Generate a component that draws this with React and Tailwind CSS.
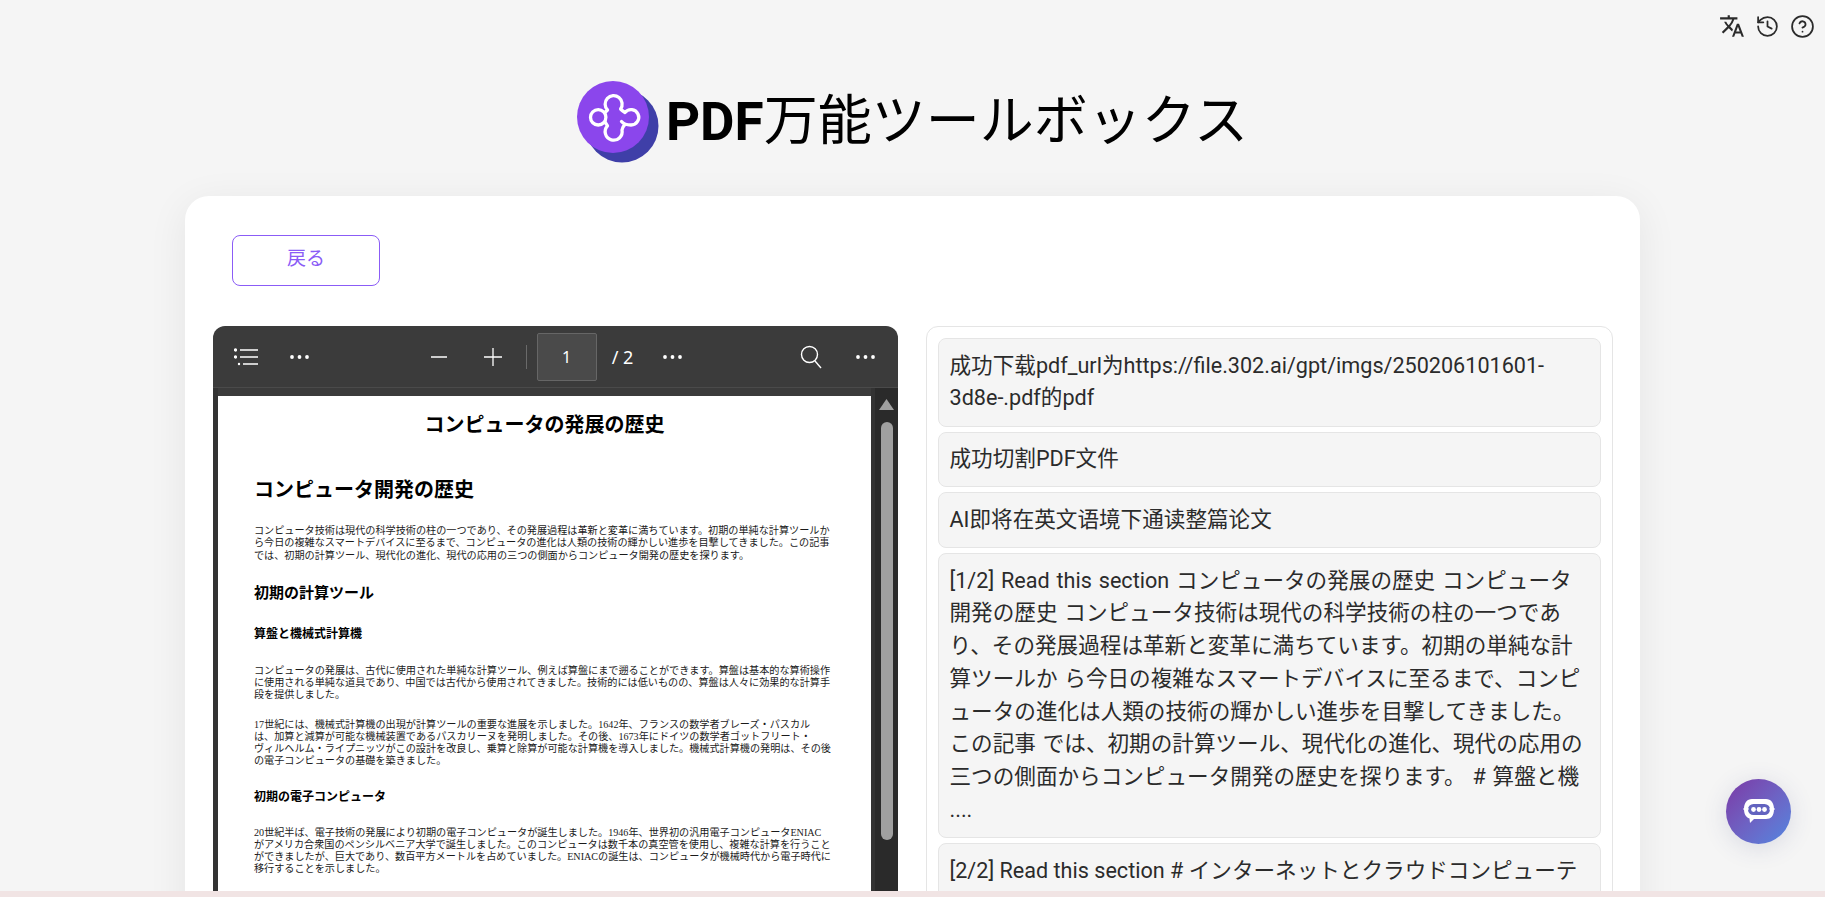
import { History, CircleHelp } from "lucide-react";
import { MdTranslate } from "react-icons/md";

const uiJa = "font-['Roboto','Noto_Sans_CJK_JP',sans-serif]";
const uiZh = "font-['Roboto','Noto_Sans_CJK_SC',sans-serif]";
const pdfFont = "font-['Liberation_Serif','Noto_Sans_CJK_JP',serif]";

const paragraphs = {
  intro: [
    "コンピュータ技術は現代の科学技術の柱の一つであり、その発展過程は革新と変革に満ちています。初期の単純な計算ツールか",
    "ら今日の複雑なスマートデバイスに至るまで、コンピュータの進化は人類の技術の輝かしい進歩を目撃してきました。この記事",
    "では、初期の計算ツール、現代化の進化、現代の応用の三つの側面からコンピュータ開発の歴史を探ります。",
  ],
  abacus: [
    "コンピュータの発展は、古代に使用された単純な計算ツール、例えば算盤にまで遡ることができます。算盤は基本的な算術操作",
    "に使用される単純な道具であり、中国では古代から使用されてきました。技術的には低いものの、算盤は人々に効果的な計算手",
    "段を提供しました。",
  ],
  machine: [
    "17世紀には、機械式計算機の出現が計算ツールの重要な進展を示しました。1642年、フランスの数学者ブレーズ・パスカル",
    "は、加算と減算が可能な機械装置であるパスカリーヌを発明しました。その後、1673年にドイツの数学者ゴットフリート・",
    "ヴィルヘルム・ライプニッツがこの設計を改良し、乗算と除算が可能な計算機を導入しました。機械式計算機の発明は、その後",
    "の電子コンピュータの基礎を築きました。",
  ],
  eniac: [
    "20世紀半ば、電子技術の発展により初期の電子コンピュータが誕生しました。1946年、世界初の汎用電子コンピュータENIAC",
    "がアメリカ合衆国のペンシルベニア大学で誕生しました。このコンピュータは数千本の真空管を使用し、複雑な計算を行うこと",
    "ができましたが、巨大であり、数百平方メートルを占めていました。ENIACの誕生は、コンピュータが機械時代から電子時代に",
    "移行することを示しました。",
  ],
};

const sectionLines = [
  "[1/2] Read this section コンピュータの発展の歴史 コンピュータ",
  "開発の歴史 コンピュータ技術は現代の科学技術の柱の一つであ",
  "り、その発展過程は革新と変革に満ちています。初期の単純な計",
  "算ツールか ら今日の複雑なスマートデバイスに至るまで、コンピ",
  "ュータの進化は人類の技術の輝かしい進歩を目撃してきました。",
  "この記事 では、初期の計算ツール、現代化の進化、現代の応用の",
  "三つの側面からコンピュータ開発の歴史を探ります。 # 算盤と機",
];

function Logo() {
  return (
    <svg width="82" height="82" viewBox="0 0 82 82" className="shrink-0">
      <circle cx="45" cy="45" r="36.5" fill="#3f3fa8" />
      <circle cx="36" cy="36" r="36" fill="#8b46ec" />
      <g fill="none" stroke="white" strokeWidth="3.3" strokeLinecap="round" strokeLinejoin="round">
        <circle cx="21.2" cy="36.3" r="7.7" />
        <path d="M28 31.5 L30.5 29 A8.5 8.5 0 1 1 43.6 28 Q45.5 30 48 31.5 A7.7 7.7 0 1 1 54 44 C50 44 46.5 43 44.5 40.5" />
        <path d="M28 41 L30.5 44.8 A8.5 8.5 0 1 0 45 49 Q45.5 46 47.5 44" />
      </g>
    </svg>
  );
}

function Dots() {
  return (
    <svg width="21" height="6" viewBox="0 0 21 6" fill="white">
      <circle cx="3" cy="3" r="1.9" />
      <circle cx="10.5" cy="3" r="1.9" />
      <circle cx="18" cy="3" r="1.9" />
    </svg>
  );
}

function PdfToolbar() {
  return (
    <div className="flex h-[62px] items-center justify-between border-b border-[#4a4a4a] pl-[21px] pr-[22px] text-white">
      <div className="flex items-center gap-[31px]">
        <svg width="24" height="18" viewBox="0 0 24 18" fill="none" stroke="white" strokeWidth="1.3">
          <circle cx="1.5" cy="2" r="1" fill="white" />
          <circle cx="1.5" cy="9" r="1" fill="white" />
          <circle cx="5" cy="16" r="1.2" fill="white" stroke="none" />
          <path d="M6 2 H24 M6 9 H24 M9 16 H24" />
        </svg>
        <Dots />
      </div>
      <div className="ml-[4px] flex items-center">
        <svg width="16" height="16" viewBox="0 0 16 16" stroke="white" strokeWidth="1.3" className="mr-[37px]">
          <path d="M0 8 H16" />
        </svg>
        <svg width="18" height="18" viewBox="0 0 18 18" stroke="white" strokeWidth="1.3" className="mr-[24px]">
          <path d="M0 9 H18 M9 0 V18" />
        </svg>
        <div className="mr-[10px] h-[24px] w-px bg-[#6a6a6a]" />
        <div className="mr-[15px] flex h-[48px] w-[60px] items-center justify-center rounded-[2px] border border-[#666666] bg-[#4a4a4a] font-['Noto_Sans',sans-serif] text-base">
          1
        </div>
        <span className="mr-[29px] font-['Noto_Sans',sans-serif] text-lg">/ 2</span>
        <Dots />
      </div>
      <div className="flex items-center gap-[33px]">
        <svg width="22" height="24" viewBox="0 0 22 24" fill="none" stroke="white" strokeWidth="1.4">
          <circle cx="9.5" cy="9.5" r="8" />
          <path d="M15 16 L21 23" />
        </svg>
        <Dots />
      </div>
    </div>
  );
}

function PdfParagraph({ lines, className = "" }) {
  return (
    <div className={`text-[10.15px] leading-[12.25px] text-[#1a1a1a] ${className}`}>
      {lines.map((line) => (
        <div key={line} className="whitespace-nowrap">
          {line}
        </div>
      ))}
    </div>
  );
}

function PdfViewer() {
  return (
    <div className="h-[700px] overflow-hidden rounded-t-xl bg-[#3b3b3b]">
      <PdfToolbar />
      <div className="flex h-full">
        <div className="h-full w-[5px] bg-[#333333]" />
        <div className={`mt-[8px] h-full w-[653px] overflow-hidden bg-white pl-[36px] text-black ${pdfFont}`}>
          <h1 className="mt-[15px] pr-[36px] text-center text-[20px] font-bold leading-[28px]">コンピュータの発展の歴史</h1>
          <h2 className="mt-[37px] text-[20px] font-bold leading-[28px]">コンピュータ開発の歴史</h2>
          <PdfParagraph lines={paragraphs.intro} className="mt-[21px]" />
          <h3 className="mt-[20px] text-[15px] font-bold leading-[22px]">初期の計算ツール</h3>
          <h4 className="mt-[21px] text-[12px] font-bold leading-[18px]">算盤と機械式計算機</h4>
          <PdfParagraph lines={paragraphs.abacus} className="mt-[22px]" />
          <PdfParagraph lines={paragraphs.machine} className="mt-[17px]" />
          <h4 className="mt-[20px] text-[12px] font-bold leading-[18px]">初期の電子コンピュータ</h4>
          <PdfParagraph lines={paragraphs.eniac} className="mt-[21px]" />
        </div>
        <div className="h-full w-[4px] bg-[#333333]" />
        <div className="flex h-full w-[23px] flex-col items-center bg-[#2a2a2a] pt-[11px]">
          <svg width="15" height="11" viewBox="0 0 15 11" fill="#a0a0a0">
            <path d="M7.5 0 L15 11 H0 Z" />
          </svg>
          <div className="mt-[12px] h-[418px] w-[12px] rounded-full bg-[#a0a0a0]" />
        </div>
      </div>
    </div>
  );
}

function LogItem({ children, font = uiZh }) {
  return (
    <div className={`rounded-lg border border-[#e5e5e5] bg-[#f5f5f5] px-[10.5px] py-[10.5px] text-[21.6px] leading-[32.75px] text-[#2b2b2b] ${font}`}>
      {children}
    </div>
  );
}

function LogPanel() {
  return (
    <div className="flex h-[700px] flex-col gap-[5px] overflow-hidden rounded-xl border border-[#e5e5e5] p-[11px]">
      <LogItem>成功下载pdf_url为https://file.302.ai/gpt/imgs/250206101601-3d8e-.pdf的pdf</LogItem>
      <LogItem>成功切割PDF文件</LogItem>
      <LogItem>AI即将在英文语境下通读整篇论文</LogItem>
      <LogItem font={uiJa}>
        {sectionLines.map((line) => (
          <div key={line} className="whitespace-nowrap [word-spacing:1.5px]">
            {line}
          </div>
        ))}
        <div className="h-[33px]">....</div>
      </LogItem>
      <LogItem font={uiJa}>[2/2] Read this section # インターネットとクラウドコンピューティング</LogItem>
    </div>
  );
}

export default function App() {
  return (
    <div className="relative h-[897px] overflow-hidden bg-[#f1e4e4]">
      <div className="h-[891px] overflow-hidden bg-[#f5f5f5]">
        <div className="flex items-center justify-end gap-[10px] pr-[10px] pt-[13px] text-[#2b2b2b]">
          <MdTranslate size={26} />
          <History size={25} strokeWidth={1.7} />
          <CircleHelp size={25} strokeWidth={1.7} />
        </div>
        <div className="mt-[42px] flex items-center justify-center gap-[7px]">
          <Logo />
          <h1 className={`text-[54px] leading-[82px] text-black ${uiJa}`}>
            <span className="text-[53px] font-bold">PDF</span>万能ツールボックス
          </h1>
        </div>
        <div className="mx-auto mt-[33px] h-[800px] w-[1455px] rounded-3xl bg-white pl-[28px] pr-[27px] pt-[39px] shadow-[0_8px_40px_rgba(0,0,0,0.07)]">
          <button className={`ml-[19px] h-[51px] w-[148px] rounded-lg border border-[#8b5cf6] pb-[3px] text-[19px] text-[#8b5cf6] ${uiJa}`}>
            戻る
          </button>
          <div className="mt-[40px] grid grid-cols-[685px_687px] gap-[28px]">
            <PdfViewer />
            <LogPanel />
          </div>
        </div>
      </div>
      <div className="absolute bottom-[53px] right-[34px] flex h-[65px] w-[65px] items-center justify-center rounded-full bg-gradient-to-br from-[#7a38a6] to-[#4f86e0] shadow-[0_4px_24px_rgba(60,70,130,0.15)]">
        <svg width="32" height="28" viewBox="0 0 32 28">
          <path d="M9 1 H23 C28 1 31 5 31 11 C31 18 28 21 23 21 H11 L7 25 L6.5 20.5 C3 19.5 1 16 1 11 C1 5 4 1 9 1 Z" fill="white" />
          <rect x="5" y="6" width="22" height="11" rx="5.5" fill="#6263bf" />
          <path d="M0 11 H6 M26 11 H32" stroke="white" strokeWidth="1" />
          <circle cx="10.5" cy="11.5" r="2.4" fill="white" />
          <circle cx="16" cy="11.5" r="2.4" fill="white" />
          <circle cx="21.5" cy="11.5" r="2.4" fill="white" />
        </svg>
      </div>
    </div>
  );
}
